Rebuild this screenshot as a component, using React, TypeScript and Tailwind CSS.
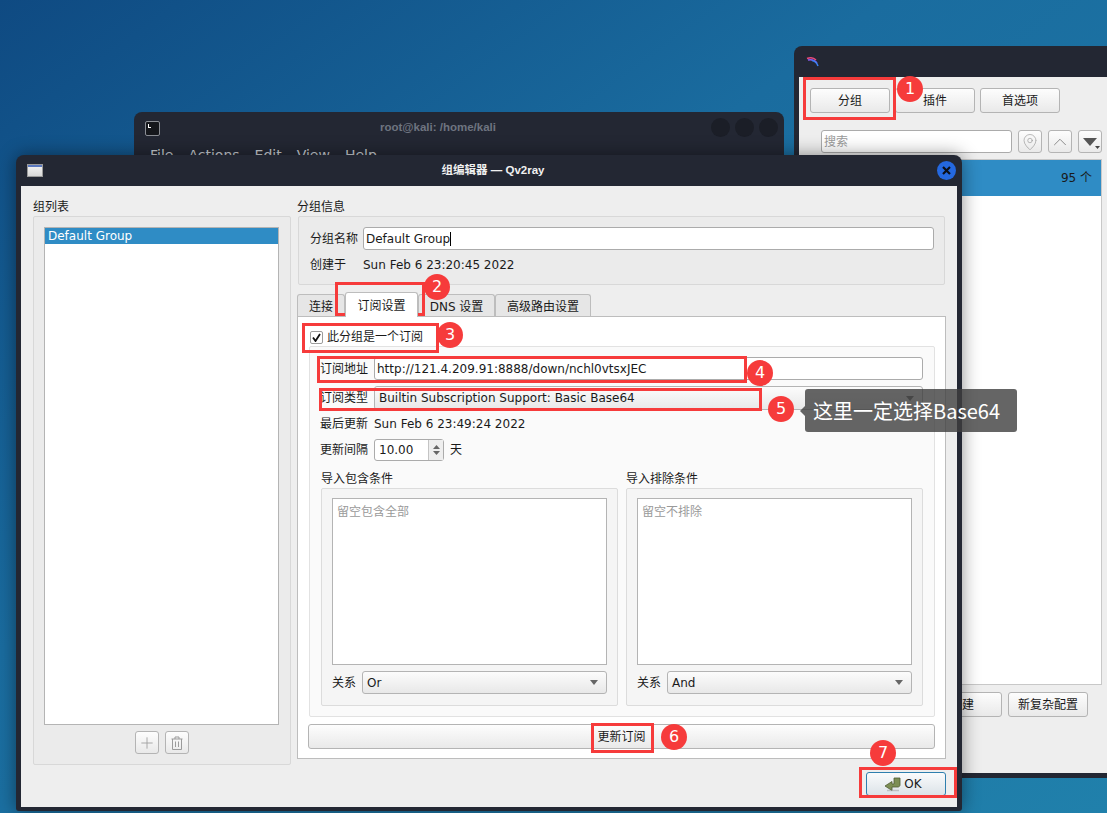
import React from 'react';
import { Plus, ChevronUp, MapPin } from 'lucide-react';

const Qtbtn = 'flex items-center justify-center rounded-[3px] border border-[#b4b4b4] bg-linear-to-b from-[#fdfdfd] to-[#e9e9e9] text-[12px] text-[#1a1a1a]';
const Field = 'flex items-center rounded-[3px] border border-[#ababab] bg-white px-[2px] text-[12px] text-[#1a1a1a]';

const Arrow = () => (
  <svg width="8" height="5" viewBox="0 0 8 5" className="shrink-0">
    <path d="M0 0h8L4 5z" fill="#666666" />
  </svg>
);

const Combo = ({ text, className }: { text: string; className: string }) => (
  <div className={`flex items-center justify-between rounded-[3px] border border-[#b4b4b4] bg-linear-to-b from-[#fcfcfc] to-[#e8e8e8] pl-[4px] pr-[8px] text-[12px] text-[#1a1a1a] ${className}`}>
    <span>{text}</span>
    <Arrow />
  </div>
);

const FilterBox = ({ title, hint, mode }: { title: string; hint: string; mode: string }) => (
  <div className="flex w-[297px] flex-col">
    <div className="flex h-[20px] items-center pt-[1px] text-[12px] text-[#1a1a1a]">{title}</div>
    <div className="h-[218px] rounded-[2px] border border-[#dcdcdc] bg-[#f5f5f5] px-[10px] pt-[9px]">
      <div className="h-[167px] w-[275px] border border-[#b4b4b4] bg-white pl-[4px] pt-[6px] text-[12px] leading-[14px] text-[#9a9a9a]">{hint}</div>
      <div className="mt-[6px] flex h-[23px] items-center">
        <span className="w-[30px] text-[12px] text-[#1a1a1a]">关系</span>
        <Combo text={mode} className="h-[23px] w-[245px]" />
      </div>
    </div>
  </div>
);

const OkIcon = () => (
  <svg width="17" height="15" viewBox="0 0 17 15" className="mr-[3px]">
    <path d="M10 1h6v7c0 1-1 2-2 2H8v3.500L1 9l7-4.500V7h2z" fill="#7d8f55" stroke="#4f5c33" strokeWidth="0.8" />
    <path d="M3 13.500h12" stroke="#9a9a9a" strokeWidth="1.500" opacity="0.5" />
  </svg>
);

const TrashIcon = () => (
  <svg width="12" height="14" viewBox="0 0 12 14" fill="none" stroke="#9b9b9b" strokeWidth="1">
    <path d="M.5 3h11M4 3V1h4v2M1.500 3v10.500h9V3M4.500 5.500v5.500M7.500 5.500v5.500" />
  </svg>
);

const QvLogo = () => (
  <svg width="13" height="10" viewBox="0 0 13 10" fill="none" strokeWidth="1.500">
    <path d="M1 1.500C5 0 8 1 10 3" stroke="#e84a7a" />
    <path d="M2 3C6 2 9 3.500 11 6" stroke="#8b5cf6" />
    <path d="M6 3.500C9 4 11 6 12 9" stroke="#3b82f6" />
  </svg>
);

const BackWindow = () => (
  <div className="absolute left-[794px] top-[46px] h-[732px] w-[330px] rounded-t-[8px] bg-[#232733] px-[5px] pb-[5px]">
    <div className="flex h-[31px] items-center pl-[7px]">
      <QvLogo />
    </div>
    <div className="h-[696px] bg-[#eeeeee] pl-[11px] pt-[11px]">
      <div className="flex gap-[5px]">
        <div className={`${Qtbtn} h-[25px] w-[80px]`}>分组</div>
        <div className={`${Qtbtn} h-[25px] w-[80px]`}>插件</div>
        <div className={`${Qtbtn} h-[25px] w-[80px]`}>首选项</div>
      </div>
      <div className="ml-[11px] mt-[17px] flex gap-[6px]">
        <div className={`${Field} h-[23px] w-[191px] text-[#9a9a9a]`}>搜索</div>
        <div className={`${Qtbtn} h-[23px] w-[24px]`}><MapPin size={18} strokeWidth={0.9} color="#999999" /></div>
        <div className={`${Qtbtn} h-[23px] w-[24px]`}><ChevronUp size={22} strokeWidth={0.8} color="#666666" /></div>
        <div className={`${Qtbtn} relative h-[23px] w-[24px]`}>
          <svg width="14" height="8" viewBox="0 0 14 8"><path d="M0 0h14L7 8z" fill="#555555" /></svg>
          <svg width="5" height="3" viewBox="0 0 5 3" className="absolute bottom-[3px] right-[1px]"><path d="M0 0h5L2.500 3z" fill="#444444" /></svg>
        </div>
      </div>
      <div className="mt-[6px] h-[526px] w-[292px] border border-[#c8c8c8] bg-white">
        <div className="flex h-[36px] items-center justify-end bg-[#2f8cc5] pr-[9px] text-[12px] text-[#1a1a1a]">95 个</div>
      </div>
      <div className="mt-[7px] flex justify-start gap-[6px] pl-[112px]">
        <div className={`${Qtbtn} h-[25px] w-[80px] justify-end pr-[27px]`}>建</div>
        <div className={`${Qtbtn} h-[25px] w-[80px]`}>新复杂配置</div>
      </div>
    </div>
  </div>
);

const Terminal = () => (
  <div className="absolute left-[134px] top-[112px] h-[80px] w-[650px] rounded-t-[8px] bg-[#232733]">
    <div className="relative flex h-[32px] items-center justify-center pr-[42px] font-['Liberation_Sans'] text-[11.5px] font-bold text-[#6e7480]">
      <div className="absolute left-[11px] top-[9px] h-[15px] w-[15px] rounded-[2px] border border-[#8a8d94] bg-[#15171c]">
        <div className="ml-[2px] mt-[2px] h-[4px] w-[3px] border-b border-l border-white" />
      </div>
      root@kali: /home/kali
      <div className="absolute right-[6px] top-[6px] flex gap-[5px]">
        <div className="h-[19px] w-[19px] rounded-full bg-[#1b1e27]" />
        <div className="h-[19px] w-[19px] rounded-full bg-[#1b1e27]" />
        <div className="h-[19px] w-[19px] rounded-full bg-[#1b1e27]" />
      </div>
    </div>
    <div className="flex gap-[15px] pl-[16px] pt-[1px] text-[14px] leading-[20px] text-[#c8ccd2]">
      <span>File</span>
      <span>Actions</span>
      <span>Edit</span>
      <span>View</span>
      <span>Help</span>
    </div>
  </div>
);

const Dialog = () => (
  <div className="absolute left-[16px] top-[155px] h-[656px] w-[946px] rounded-t-[8px] rounded-b-[3px] bg-[#232733] px-[5px] pb-[4px] shadow-[0_0_18px_rgba(0,0,0,0.45)]">
    <div className="relative flex h-[31px] items-center justify-center pl-[8px] font-['Liberation_Sans','Noto_Sans_CJK_SC'] text-[11.5px] font-bold text-[#f0f0f0]">
      <div className="absolute left-[6px] top-[9px] h-[13px] w-[16px] border border-[#9a9a9a] bg-linear-to-b from-[#f5f5f5] to-[#d8d8d8]">
        <div className="h-[2px] bg-[#5a78c0]" />
      </div>
      组编辑器 — Qv2ray
      <div className="absolute right-[1px] top-[6px] flex h-[19px] w-[19px] items-center justify-center rounded-full bg-[#2468e0] text-[#0c0f18]">
        <svg width="9" height="9" viewBox="0 0 9 9" stroke="currentColor" strokeWidth="2.200"><path d="M1 1l7 7M8 1L1 8" /></svg>
      </div>
    </div>
    <div className="flex h-[621px] gap-[6px] bg-[#eeeeee] pl-[12px]">
      <div className="w-[258px]">
        <div className="flex h-[30px] items-end pb-[2px] text-[12px] leading-[14px] text-[#1a1a1a]">组列表</div>
        <div className="h-[549px] rounded-[2px] border border-[#d8d8d8] bg-[#ebebeb] pl-[10px] pt-[10px]">
          <div className="h-[498px] w-[235px] border border-[#b4b4b4] bg-white">
            <div className="flex h-[16px] items-center bg-[#2f8cc5] pl-[3px] text-[12px] text-white">Default Group</div>
          </div>
          <div className="mt-[6px] flex justify-center gap-[6px] pr-[11px]">
            <div className={`${Qtbtn} h-[23px] w-[24px]`}><Plus size={18} strokeWidth={1.2} color="#a0a0a0" /></div>
            <div className={`${Qtbtn} h-[23px] w-[24px]`}><TrashIcon /></div>
          </div>
        </div>
      </div>
      <div className="w-[649px]">
        <div className="flex h-[30px] items-end pb-[2px] text-[12px] leading-[14px] text-[#1a1a1a]">分组信息</div>
        <div className="ml-[1px] h-[69px] w-[647px] rounded-[2px] border border-[#d8d8d8] bg-[#ebebeb] pl-[11px] pt-[10px] text-[12px] text-[#1a1a1a]">
          <div className="flex h-[23px] items-center">
            <span className="w-[53px]">分组名称</span>
            <div className={`${Field} h-[23px] w-[571px] border-[#2f6f9f]`}>
              Default Group<span className="h-[14px] w-px bg-black" />
            </div>
          </div>
          <div className="mt-[5px] flex h-[20px] items-center">
            <span className="w-[53px]">创建于</span>
            <span>Sun Feb 6 23:20:45 2022</span>
          </div>
        </div>
        <div className="mt-[8px] flex h-[23px] items-end text-[12px] text-[#1a1a1a]">
          <div className="flex h-[22px] w-[48px] items-center justify-center rounded-t-[3px] border border-b-0 border-[#bdbdbd] bg-[#e6e6e6] pt-[2px]">连接</div>
          <div className="z-10 -mb-px flex h-[25px] w-[73px] items-center justify-center rounded-t-[3px] border border-b-0 border-[#bdbdbd] bg-white pt-[2px]">订阅设置</div>
          <div className="flex h-[22px] w-[77px] items-center justify-center rounded-t-[3px] border border-b-0 border-[#bdbdbd] bg-[#e6e6e6] pt-[2px]">DNS 设置</div>
          <div className="flex h-[22px] w-[96px] items-center justify-center rounded-t-[3px] border border-b-0 border-[#bdbdbd] bg-[#e6e6e6] pt-[2px]">高级路由设置</div>
        </div>
        <div className="h-[443px] border border-[#bdbdbd] bg-white pl-[11px] text-[12px] text-[#1a1a1a]">
          <div className="flex h-[29px] items-center pt-[11px] pl-[1px]">
            <div className="mr-[4px] flex h-[13px] w-[13px] items-center justify-center rounded-[2px] border border-[#9c9c9c] bg-white">
              <svg width="9" height="9" viewBox="0 0 9 9" fill="none" stroke="#111111" strokeWidth="1.800"><path d="M1 4.500l2.500 3.500L8 1" /></svg>
            </div>
            此分组是一个订阅
          </div>
          <div className="h-[371px] w-[626px] rounded-[2px] border border-[#e2e2e2] bg-[#fafafa] pl-[10px] pt-[10px]">
            <div className="flex h-[23px] items-center">
              <span className="w-[54px]">订阅地址</span>
              <div className={`${Field} h-[23px] w-[549px]`}>http://121.4.209.91:8888/down/nchl0vtsxJEC</div>
            </div>
            <div className="mt-[6px] flex h-[24px] items-center">
              <span className="w-[54px]">订阅类型</span>
              <Combo text="Builtin Subscription Support: Basic Base64" className="h-[24px] w-[549px]" />
            </div>
            <div className="mt-[4px] flex h-[20px] items-center">
              <span className="w-[54px]">最后更新</span>
              <span>Sun Feb 6 23:49:24 2022</span>
            </div>
            <div className="mt-[5px] flex h-[22px] items-center">
              <span className="w-[54px]">更新间隔</span>
              <div className={`${Field} h-[22px] w-[70px] justify-between pl-[4px] pr-0`}>
                10.00
                <div className="flex h-full w-[15px] flex-col items-center justify-center gap-[2px] border-l border-[#c4c4c4] bg-[#eeeeee]">
                  <svg width="7" height="4" viewBox="0 0 7 4"><path d="M0 4h7L3.500 0z" fill="#666666" /></svg>
                  <svg width="7" height="4" viewBox="0 0 7 4"><path d="M0 0h7L3.500 4z" fill="#666666" /></svg>
                </div>
              </div>
              <span className="ml-[6px]">天</span>
            </div>
            <div className="ml-[1px] mt-[7px] flex gap-[8px]">
              <FilterBox title="导入包含条件" hint="留空包含全部" mode="Or" />
              <FilterBox title="导入排除条件" hint="留空不排除" mode="And" />
            </div>
          </div>
          <div className={`${Qtbtn} mt-[7px] h-[25px] w-[627px] -translate-x-px`}>更新订阅</div>
        </div>
        <div className="mt-[13px] flex justify-end">
          <div className="flex h-[24px] w-[80px] items-center justify-center rounded-[3px] border border-[#2f7fae] bg-linear-to-b from-[#fafbfc] to-[#dce3e8] pr-[6px] text-[12px] text-[#1a1a1a]">
            <OkIcon />
            OK
          </div>
        </div>
      </div>
    </div>
  </div>
);

const Num = ({ n, className }: { n: number; className: string }) => (
  <div className={`absolute flex h-[26px] w-[26px] items-center justify-center rounded-full bg-[#f63b3b] text-[16px] text-white ${className}`}>{n}</div>
);

const Marks = () => (
  <>
    <div className="absolute left-[803px] top-[77px] h-[43px] w-[93px] border-[3px] border-[#f63b3b]" />
    <div className="absolute left-[335px] top-[282px] h-[34px] w-[90px] border-[3px] border-[#f63b3b]" />
    <div className="absolute left-[302px] top-[323px] h-[30px] w-[137px] border-[3px] border-[#f63b3b]" />
    <div className="absolute left-[317px] top-[356px] h-[27px] w-[430px] border-[3px] border-[#f63b3b]" />
    <div className="absolute left-[319px] top-[388px] h-[23px] w-[443px] border-[3px] border-[#f63b3b]" />
    <div className="absolute left-[591px] top-[723px] h-[30px] w-[63px] border-[3px] border-[#f63b3b]" />
    <div className="absolute left-[859px] top-[767px] h-[31px] w-[98px] border-[3px] border-[#f63b3b]" />
    <Num n={1} className="left-[897px] top-[76px]" />
    <Num n={2} className="left-[424px] top-[274px]" />
    <Num n={3} className="left-[437px] top-[322px]" />
    <Num n={4} className="left-[747px] top-[360px]" />
    <Num n={5} className="left-[768px] top-[396px]" />
    <Num n={6} className="left-[661px] top-[724px]" />
    <Num n={7} className="left-[870px] top-[740px]" />
    <div className="absolute left-[805px] top-[389px] flex h-[43px] w-[212px] items-center rounded-[3px] bg-[#3f3f3f]/80 pl-[8px] font-['Noto_Sans_CJK_SC'] text-[20px] text-white">
      <div className="absolute left-[-5px] top-[17px] h-0 w-0 border-y-[5px] border-r-[5px] border-y-transparent border-r-[#3f3f3f]/80" />
      这里一定选择Base64
    </div>
  </>
);

export default function App() {
  return (
    <div
      className="relative h-[813px] w-[1107px] overflow-hidden bg-linear-to-br from-[#0f4a82] via-[#1a6c9f] via-40% to-[#2080ab]"
      style={{ fontFamily: '"DejaVu Sans", "Noto Sans CJK SC", sans-serif' }}
    >
      <BackWindow />
      <Terminal />
      <Dialog />
      <Marks />
    </div>
  );
}
